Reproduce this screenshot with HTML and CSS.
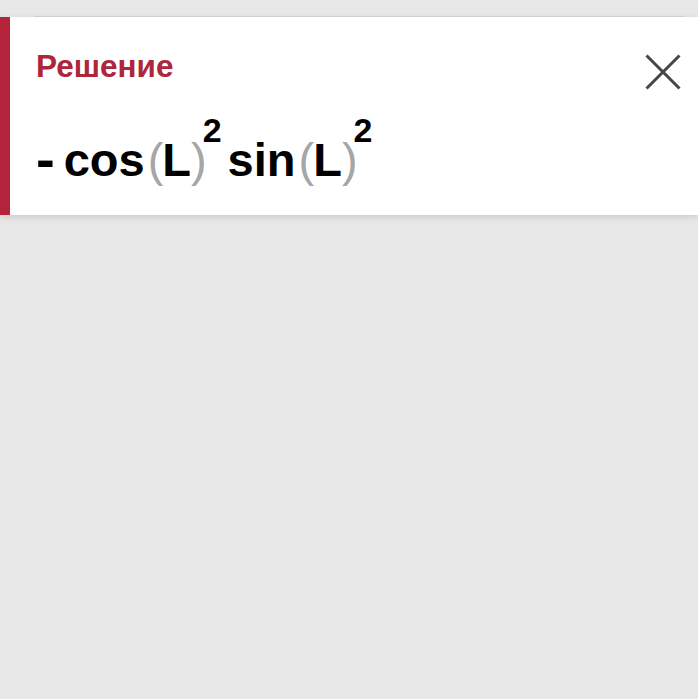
FILE: index.html
```html
<!DOCTYPE html>
<html>
<head>
  <title>Решение</title>
  <link rel="stylesheet" href="styles.css">
</head>
<body>
  <div class="topline"></div>
  <div class="card">
    <div class="card-body">
      <h2 class="title">Решение</h2>
      <div class="formula">
        <span class="minus">-</span><span class="fn">cos</span><span class="paren open">(</span><span class="var">L</span><span class="paren close-p">)</span><sup>2</sup><span class="fn">sin</span><span class="paren open">(</span><span class="var">L</span><span class="paren close-p">)</span><sup>2</sup>
      </div>
    </div>
    <button class="close" aria-label="Закрыть">
      <svg width="36" height="36" viewBox="0 0 36 36">
        <path d="M1.5 1.5 L34.5 34.5 M34.5 1.5 L1.5 34.5" stroke="#454545" stroke-width="3" fill="none"/>
      </svg>
    </button>
  </div>
</body>
</html>
```

FILE: styles.css
```css
body {
  font-family: "Liberation Sans", Arial, sans-serif;
  margin: 0;
  padding: 0;
  background-color: #e7e7e7;
  height: 699px;
}

.topline {
  height: 16px;
  margin: 0 13px 0 34px;
  border-bottom: 1px solid #d6d6d6;
}

.card {
  display: flex;
  justify-content: space-between;
  height: 198px;
  background-color: #fff;
  border-left: 10px solid #b3243b;
  box-shadow: 0 2px 6px rgba(0, 0, 0, 0.12);
}

.card-body {
  padding: 31px 0 0 26px;
}

.title {
  margin: 0;
  font-size: 31.5px;
  font-weight: bold;
  line-height: 36px;
  color: #ad2639;
}

.formula {
  margin-top: 46px;
  font-size: 47px;
  font-weight: bold;
  line-height: 60px;
  color: #000;
  white-space: nowrap;
}

.minus {
  display: inline-block;
  transform: scale(1.2, 1.15);
  transform-origin: left center;
  margin-right: 12px;
}

.var {
  margin-right: -2px;
}

.paren {
  font-weight: normal;
  color: #a6a6a6;
}

.open {
  margin: 0 -1px 0 3px;
}

.close-p {
  margin: 0 -4px 0 2px;
}

sup {
  font-size: 34px;
  line-height: 0;
  vertical-align: 34px;
  margin-right: 6px;
}

.close {
  background: none;
  border: none;
  padding: 0;
  margin: 37px 17px 0 0;
  width: 36px;
  height: 36px;
  cursor: pointer;
}
```
